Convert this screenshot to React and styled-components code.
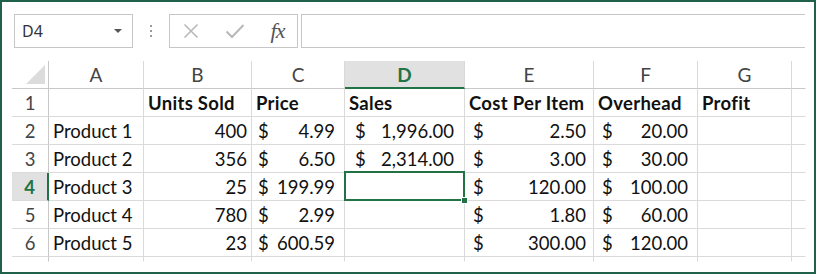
import React from 'react';
import styled, { createGlobalStyle, css } from 'styled-components';

const GREEN = '#217346';
const GRID = '#dadada';
const HEAD_LINE = '#c8c8c8';

const GlobalStyle = createGlobalStyle`
  html, body {
    margin: 0;
    padding: 0;
    background: #fff;
  }
  body {
    font-family: 'Lato', 'Liberation Sans', sans-serif;
  }
`;

const Frame = styled.div`
  box-sizing: border-box;
  width: 816px;
  height: 274px;
  border: 2px solid #1f6149;
  background: #fff;
  overflow: hidden;
`;

const Toolbar = styled.div`
  display: flex;
  height: 34px;
  margin: 12px 0 0 12px;
`;

const NameBox = styled.div`
  box-sizing: border-box;
  width: 119px;
  display: flex;
  align-items: center;
  justify-content: space-between;
  padding: 0 10px 0 7px;
  border: 1px solid #c6c6c6;
  font-family: 'Noto Sans', 'Liberation Sans', sans-serif;
  font-size: 16px;
  color: #333;
`;

const Caret = styled.span`
  width: 0;
  height: 0;
  border-left: 4px solid transparent;
  border-right: 4px solid transparent;
  border-top: 4px solid #555;
`;

const Grip = styled.div`
  width: 36px;
  display: flex;
  flex-direction: column;
  align-items: center;
  justify-content: center;
  gap: 3px;

  span {
    width: 2px;
    height: 2px;
    background: #9a9a9a;
  }
`;

const FxButtons = styled.div`
  box-sizing: border-box;
  width: 129px;
  display: flex;
  align-items: center;
  border: 1px solid #c6c6c6;
`;

const FxSlot = styled.div`
  width: ${(p) => p.w}px;
  display: flex;
  align-items: center;
  justify-content: center;
`;

const FxLabel = styled.span`
  font-family: 'Liberation Serif', 'DejaVu Serif', serif;
  font-style: italic;
  font-size: 22px;
  color: #555;
  letter-spacing: -1px;
  line-height: 1;
`;

const FormulaInput = styled.div`
  box-sizing: border-box;
  width: 504px;
  margin-left: 3px;
  border: 1px solid #c6c6c6;
  border-right: none;
`;

const Sheet = styled.div`
  display: grid;
  grid-template-columns: 37px ${(p) => p.cols.join('px ')}px 14px;
  grid-template-rows: 28px repeat(6, 28px) 5px;
  margin: 13px 0 0 10px;
`;

const Corner = styled.div`
  box-sizing: border-box;
  border-right: 1px solid ${HEAD_LINE};
  border-bottom: 1px solid ${HEAD_LINE};
`;

const ColHead = styled.div`
  box-sizing: border-box;
  display: flex;
  align-items: center;
  justify-content: center;
  font-size: 19px;
  color: #444;
  border-right: 1px solid ${(p) => (p.open ? 'transparent' : '#d9d9d9')};
  border-bottom: 1px solid ${HEAD_LINE};
  ${(p) =>
    p.active &&
    css`
      background: #e1e1e1;
      color: ${GREEN};
      font-weight: 700;
      border-bottom: 2px solid ${GREEN};
      padding-top: 1px;
    `}
`;

const RowHead = styled.div`
  box-sizing: border-box;
  display: flex;
  align-items: center;
  justify-content: center;
  font-size: 18.5px;
  color: #444;
  border-right: 1px solid ${HEAD_LINE};
  border-bottom: 1px solid ${(p) => (p.open ? 'transparent' : GRID)};
  ${(p) =>
    p.active &&
    css`
      background: #e1e1e1;
      color: ${GREEN};
      font-weight: 700;
      border-right: 2px solid ${GREEN};
    `}
`;

const Cell = styled.div`
  box-sizing: border-box;
  position: relative;
  display: flex;
  align-items: center;
  justify-content: ${(p) => (p.align === 'right' ? 'flex-end' : p.align === 'split' ? 'space-between' : 'flex-start')};
  padding: 0 ${(p) => p.padR ?? 4}px 0 ${(p) => p.padL ?? 4}px;
  font-size: 18.5px;
  font-weight: ${(p) => (p.bold ? 700 : 400)};
  letter-spacing: ${(p) => (p.bold ? '0.3px' : '0')};
  color: #111;
  white-space: nowrap;
  border-right: 1px solid ${(p) => (p.openRight ? 'transparent' : GRID)};
  border-bottom: 1px solid ${(p) => (p.openBottom ? 'transparent' : GRID)};
  ${(p) =>
    p.selected &&
    css`
      z-index: 1;
      &::after {
        content: '';
        position: absolute;
        top: -2px;
        left: -1px;
        right: -1px;
        bottom: -1px;
        border: 2px solid ${GREEN};
      }
    `}
`;

const FillHandle = styled.span`
  position: absolute;
  right: -4px;
  bottom: -4px;
  width: 5px;
  height: 5px;
  background: ${GREEN};
  border: 1px solid #fff;
  z-index: 2;
`;

const columns = [
  { key: 'A', w: 95 },
  { key: 'B', w: 108 },
  { key: 'C', w: 93, pad: [6, 9] },
  { key: 'D', w: 120, pad: [10, 10] },
  { key: 'E', w: 129, pad: [8, 7] },
  { key: 'F', w: 104, pad: [8, 9] },
  { key: 'G', w: 94 },
];

const head = (v) => ({ kind: 'head', v });
const num = (v) => ({ kind: 'num', v });
const money = (v) => ({ kind: 'money', v });

const rows = [
  [null, head('Units Sold'), head('Price'), head('Sales'), head('Cost Per Item'), head('Overhead'), head('Profit')],
  ['Product 1', num('400'), money('4.99'), money('1,996.00'), money('2.50'), money('20.00'), null],
  ['Product 2', num('356'), money('6.50'), money('2,314.00'), money('3.00'), money('30.00'), null],
  ['Product 3', num('25'), money('199.99'), null, money('120.00'), money('100.00'), null],
  ['Product 4', num('780'), money('2.99'), null, money('1.80'), money('60.00'), null],
  ['Product 5', num('23'), money('600.59'), null, money('300.00'), money('120.00'), null],
];

const ACTIVE_COL = 3;
const ACTIVE_ROW = 3;

function CellView({ value, col, selected }) {
  if (value && typeof value === 'string') {
    return <Cell selected={selected}>{value}</Cell>;
  }
  if (value && value.kind === 'head') {
    return <Cell selected={selected} bold>{value.v}</Cell>;
  }
  if (value && value.kind === 'num') {
    return <Cell selected={selected} align="right">{value.v}</Cell>;
  }
  if (value && value.kind === 'money') {
    return (
      <Cell selected={selected} align="split" padL={col.pad[0]} padR={col.pad[1]}>
        <span>$</span>
        <span>{value.v}</span>
      </Cell>
    );
  }
  return <Cell selected={selected}>{selected && <FillHandle />}</Cell>;
}

function XIcon() {
  return (
    <svg width="16" height="16" viewBox="0 0 16 16">
      <path d="M1.5 1.5 L14.5 14.5 M14.5 1.5 L1.5 14.5" stroke="#b8b8b8" strokeWidth="1.6" fill="none" />
    </svg>
  );
}

function CheckIcon() {
  return (
    <svg width="20" height="16" viewBox="0 0 20 16">
      <path d="M1.5 8.5 L7 14 L18.5 2" stroke="#b8b8b8" strokeWidth="2" fill="none" />
    </svg>
  );
}

function CornerMark() {
  return (
    <svg width="36" height="27" viewBox="0 0 36 27">
      <polygon points="33,4 33,23 14,23" fill="#dcdcdc" />
    </svg>
  );
}

export default function App() {
  return (
    <>
      <GlobalStyle />
      <Frame>
        <Toolbar>
          <NameBox>
            <span>D4</span>
            <Caret />
          </NameBox>
          <Grip>
            <span />
            <span />
            <span />
          </Grip>
          <FxButtons>
            <FxSlot w={42}>
              <XIcon />
            </FxSlot>
            <FxSlot w={46}>
              <CheckIcon />
            </FxSlot>
            <FxSlot w={39}>
              <FxLabel>fx</FxLabel>
            </FxSlot>
          </FxButtons>
          <FormulaInput />
        </Toolbar>

        <Sheet cols={columns.map((c) => c.w)}>
          <Corner>
            <CornerMark />
          </Corner>
          {columns.map((c, i) => (
            <ColHead key={c.key} active={i === ACTIVE_COL}>
              {c.key}
            </ColHead>
          ))}
          <ColHead open />

          {rows.map((row, r) => (
            <React.Fragment key={r}>
              <RowHead active={r === ACTIVE_ROW}>{r + 1}</RowHead>
              {row.map((v, c) => (
                <CellView
                  key={c}
                  value={v}
                  col={columns[c]}
                  selected={r === ACTIVE_ROW && c === ACTIVE_COL}
                />
              ))}
              <Cell openRight />
            </React.Fragment>
          ))}

          <RowHead open />
          {columns.map((c) => (
            <Cell key={c.key} openBottom />
          ))}
          <Cell openRight openBottom />
        </Sheet>
      </Frame>
    </>
  );
}
